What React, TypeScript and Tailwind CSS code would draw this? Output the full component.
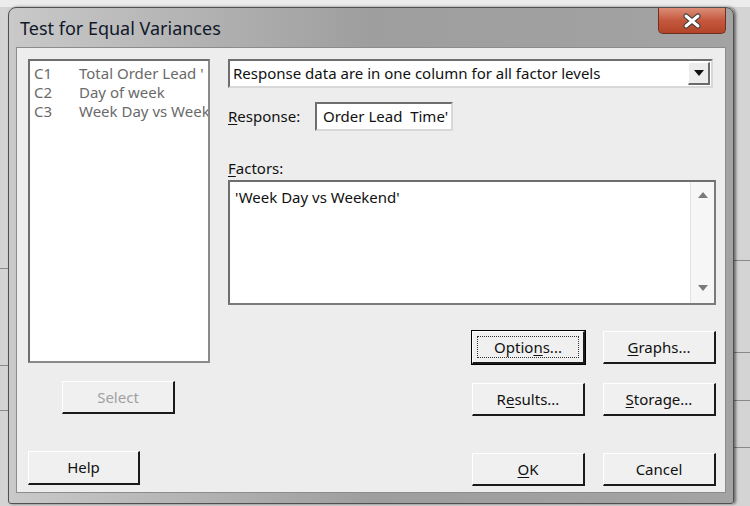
import React from 'react';

const font = { fontFamily: '"Noto Sans", "Open Sans", Arial, sans-serif' };

function Btn({ children, focused, disabled, w = 'w-[113px]', h = 'h-[33px]' }: any) {
  return (
    <div
      className={`${w} ${h} relative flex items-center justify-center bg-[#f0f0f0] border-t border-l border-t-white border-l-white border-b-2 border-r-2 border-b-[#1a1a1a] border-r-[#1a1a1a] text-[15px] ${
        focused ? 'outline outline-1 outline-black' : ''
      } ${disabled ? 'text-[#a0a0a0]' : 'text-[#111]'}`}
    >
      {focused && (
        <div className="absolute inset-[4px] border border-dotted border-[#333]" />
      )}
      <span className="relative">{children}</span>
    </div>
  );
}

const U = ({ c }: { c: string }) => <span className="underline underline-offset-2">{c}</span>;

export default function App() {
  return (
    <div className="w-[750px] h-[506px] bg-[#d4d4d4] relative overflow-hidden" style={font}>
      {/* background strips behind the dialog */}
      <div className="absolute left-0 top-0 w-full h-[7px] bg-[#ececec]" />
      <div className="absolute right-0 top-[260px] w-[16px] h-[1px] bg-[#8a8a8a]" />
      <div className="absolute right-0 top-[352px] w-[16px] h-[1px] bg-[#8a8a8a]" />
      <div className="absolute right-0 top-[400px] w-[16px] h-[1px] bg-[#8a8a8a]" />
      <div className="absolute right-0 top-[447px] w-[16px] h-[1px] bg-[#8a8a8a]" />
      <div className="absolute left-0 top-[268px] w-[8px] h-[1px] bg-[#8a8a8a]" />
      <div className="absolute left-0 top-[365px] w-[8px] h-[1px] bg-[#8a8a8a]" />
      <div className="absolute left-0 top-[410px] w-[8px] h-[1px] bg-[#8a8a8a]" />

      {/* window */}
      <div className="absolute left-[8px] top-[7px] w-[726px] h-[497px] rounded-t-[8px] rounded-b-[3px] border border-[#505050] bg-gradient-to-r from-[#c9c9c9] via-[#9e9e9e] to-[#a3a3a3] flex flex-col shadow-[2px_0_3px_rgba(0,0,0,0.5)]">
        {/* title bar */}
        <div className="h-[39px] flex items-start justify-between">
          <div className="pl-[11px] pt-[8px] text-[18px] text-[#10182a] leading-[24px]">
            Test for Equal Variances
          </div>
          <div className="mr-[7px] w-[68px] h-[26px] rounded-b-[5px] border border-[#6b3020] border-t-0 bg-gradient-to-b from-[#dc8e78] via-[#c4583e] to-[#b34428] flex items-center justify-center">
            <svg width="22" height="16" viewBox="0 0 22 16">
              <path d="M5 3 L17 13 M17 3 L5 13" stroke="#3a3a3a" strokeWidth="5" strokeLinecap="round" />
              <path d="M5 3 L17 13 M17 3 L5 13" stroke="#ffffff" strokeWidth="3" strokeLinecap="round" />
            </svg>
          </div>
        </div>

        {/* client area */}
        <div className="mx-[7px] h-[446px] bg-[#ededed] border border-[#8c8c8c] flex gap-[18px] pl-[11px] pt-[11px] text-[#111]">
          {/* left column */}
          <div className="w-[182px] flex flex-col">
            <div className="h-[304px] bg-white border-2 border-t-[#6e6e6e] border-l-[#6e6e6e] border-b-[#8a8a8a] border-r-[#8a8a8a] pt-[3px] text-[15px] leading-[19px] text-[#6a6a6a] overflow-hidden">
              {[
                ['C1', "Total Order Lead  '"],
                ['C2', 'Day of week'],
                ['C3', 'Week Day vs Weekend'],
              ].map(([c, n]) => (
                <div key={c} className="flex whitespace-nowrap">
                  <span className="w-[49px] pl-[4px] shrink-0">{c}</span>
                  <span>{n}</span>
                </div>
              ))}
            </div>
            <div className="mt-[18px] ml-[34px]">
              <Btn disabled>Select</Btn>
            </div>
            <div className="mt-[37px]">
              <Btn w="w-[112px]" h="h-[34px]">Help</Btn>
            </div>
          </div>

          {/* right column */}
          <div className="w-[488px] flex flex-col">
            <div className="w-[485px] h-[29px] bg-white border-2 border-t-[#6e6e6e] border-l-[#6e6e6e] border-b-[#d8d8d8] border-r-[#d8d8d8] flex items-center justify-between text-[15px]">
              <span className="pl-[3px] whitespace-nowrap">Response data are in one column for all factor levels</span>
              <div className="w-[22px] h-[23px] mr-[1px] bg-[#ececec] border-t border-l border-t-white border-l-white border-b-2 border-r-2 border-b-[#6a6a6a] border-r-[#6a6a6a] flex items-center justify-center">
                <svg width="10" height="6" viewBox="0 0 10 6">
                  <path d="M0 0 L10 0 L5 6 Z" fill="#111" />
                </svg>
              </div>
            </div>

            <div className="mt-[14px] flex items-center text-[15px]">
              <span className="w-[87px] first-letter:underline underline-offset-2">Response:</span>
              <div className="w-[138px] h-[29px] bg-white border-2 border-t-[#6e6e6e] border-l-[#6e6e6e] border-b-[#d8d8d8] border-r-[#d8d8d8] flex items-center pl-[6px] whitespace-nowrap">
                Order Lead&nbsp; Time'
              </div>
            </div>

            <div className="mt-[28px] text-[15px] leading-[19px] first-letter:underline underline-offset-2">
              Factors:
            </div>
            <div className="mt-[2px] h-[125px] bg-white border-2 border-t-[#6e6e6e] border-l-[#6e6e6e] border-b-[#7a7a7a] border-r-[#7a7a7a] flex text-[15px]">
              <div className="flex-1 pl-[5px] pt-[4px]">'Week Day vs Weekend'</div>
              <div className="w-[24px] bg-[#f6f6f6] border-l border-[#e2e2e2] flex flex-col items-center justify-between pt-[10px] pb-[12px]">
                <svg width="10" height="6" viewBox="0 0 10 6">
                  <path d="M0 6 L10 6 L5 0 Z" fill="#7a7a7a" />
                </svg>
                <svg width="10" height="6" viewBox="0 0 10 6">
                  <path d="M0 0 L10 0 L5 6 Z" fill="#7a7a7a" />
                </svg>
              </div>
            </div>

            <div className="mt-[26px] flex gap-[18px] pl-[244px]">
              <Btn focused>
                Optio<U c="n" />s...
              </Btn>
              <Btn>
                <U c="G" />raphs...
              </Btn>
            </div>
            <div className="mt-[19px] flex gap-[18px] pl-[244px]">
              <Btn>
                R<U c="e" />sults...
              </Btn>
              <Btn>
                <U c="S" />torage...
              </Btn>
            </div>
            <div className="mt-[37px] flex gap-[18px] pl-[244px]">
              <Btn>
                <U c="O" />K
              </Btn>
              <Btn>Cancel</Btn>
            </div>
          </div>
        </div>
      </div>
    </div>
  );
}
